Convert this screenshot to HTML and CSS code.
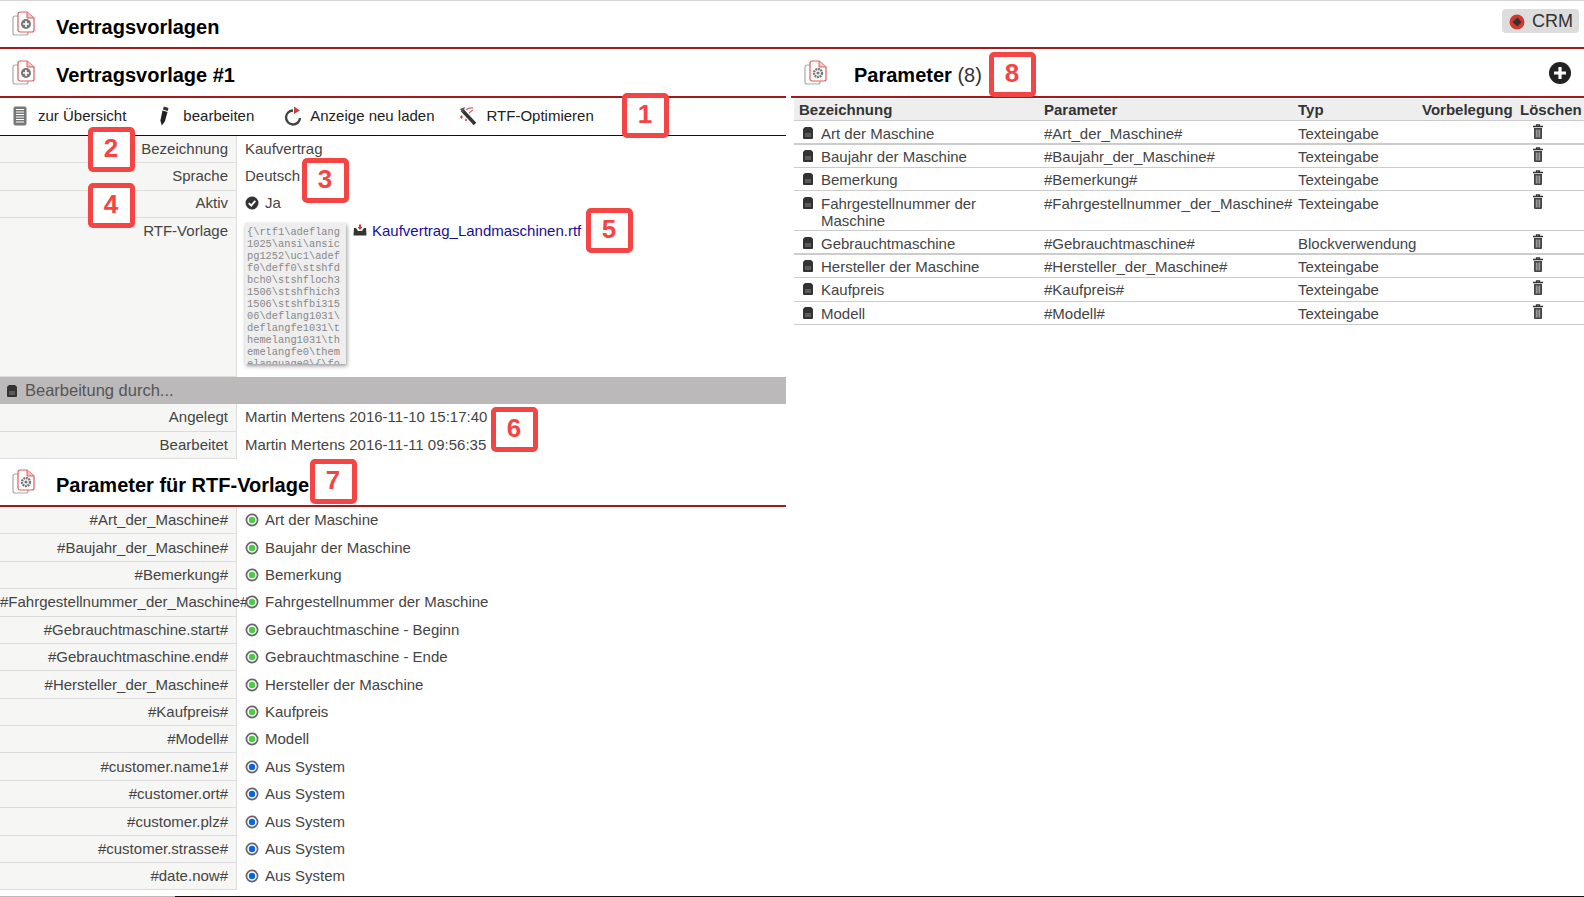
FILE: index.html
```html
<!DOCTYPE html>
<html lang="de">
<head>
    <meta charset="UTF-8">
    <title>Vertragsvorlagen</title>
    <link rel="stylesheet" href="styles.css">
</head>
<body>
    <svg class="defs" width="0" height="0">
        <symbol id="i-doc" viewBox="0 0 24 26">
            <path d="M6 5H3a2 2 0 0 0-2 2v15a2 2 0 0 0 2 2h11a2 2 0 0 0 2-2v-1" fill="#fff" stroke="#aaa" stroke-width="1.2"/>
            <path d="M8 1h7l7 6v12a2 2 0 0 1-2 2H8a2 2 0 0 1-2-2V3a2 2 0 0 1 2-2z" fill="#fff" stroke="#d9605c" stroke-width="1.2"/>
            <path d="M15 1v6h7" fill="#f3c6c4" stroke="#d9605c" stroke-width="1"/>
            <circle cx="14" cy="13" r="5" fill="#777"/>
            <path d="M14 10v6M11 13h6" stroke="#fff" stroke-width="1.6"/>
        </symbol>
        <symbol id="i-gear" viewBox="0 0 24 26">
            <path d="M6 5H3a2 2 0 0 0-2 2v15a2 2 0 0 0 2 2h11a2 2 0 0 0 2-2v-1" fill="#fff" stroke="#aaa" stroke-width="1.2"/>
            <path d="M8 1h7l7 6v12a2 2 0 0 1-2 2H8a2 2 0 0 1-2-2V3a2 2 0 0 1 2-2z" fill="#fff" stroke="#d9605c" stroke-width="1.2"/>
            <path d="M15 1v6h7" fill="#f3c6c4" stroke="#d9605c" stroke-width="1"/>
            <circle cx="14" cy="13" r="4" fill="none" stroke="#777" stroke-width="2.4" stroke-dasharray="2 .6"/>
            <circle cx="14" cy="13" r="1.6" fill="#777"/>
        </symbol>
        <symbol id="i-card" viewBox="0 0 12 13">
            <path d="M3 1h6l2 2v9a1 1 0 0 1-1 1H2a1 1 0 0 1-1-1V3z" fill="#333"/>
            <path d="M3 8h6M3 10h6" stroke="#999" stroke-width=".8"/>
        </symbol>
        <symbol id="i-trash" viewBox="0 0 12 15">
            <path d="M1 2.5h10M4.5 2V.8h3V2" fill="none" stroke="#333" stroke-width="1.3"/>
            <path d="M2 4h8v10a1 1 0 0 1-1 1H3a1 1 0 0 1-1-1z" fill="#444"/>
            <path d="M4.3 5.5v8M6 5.5v8M7.7 5.5v8" stroke="#ccc" stroke-width=".8"/>
        </symbol>
        <symbol id="i-radio" viewBox="0 0 14 14">
            <circle cx="7" cy="7" r="5.6" fill="#fff" stroke="#666" stroke-width="1.7"/>
            <circle cx="7" cy="7" r="3.2" fill="currentColor"/>
        </symbol>
    </svg>

    <header class="head head-top">
        <svg class="doc-icon"><use href="#i-doc"/></svg>
        <h1 class="title">Vertragsvorlagen</h1>
        <a class="crm" href="#">
            <svg class="crm-icon" viewBox="0 0 16 16">
                <circle cx="8" cy="8" r="7.5" fill="#d2392e"/>
                <path d="M3.5 8L8.5 3.5L12.5 8L8.5 12.5z" fill="#333"/>
            </svg>
            CRM
        </a>
    </header>

    <div class="page">
        <div class="left">
            <div class="head">
                <svg class="doc-icon"><use href="#i-doc"/></svg>
                <h2 class="title">Vertragsvorlage #1</h2>
            </div>
            <nav class="toolbar">
                <a class="tool tool-list" href="#">
                    <svg class="tool-icon" viewBox="0 0 14 20" width="14" height="20">
                        <rect x=".5" y=".5" width="13" height="19" rx="2" fill="#777"/>
                        <path d="M3 3.5h8M3 6h8M3 8.500h8M3 11h8M3 13.500h8M3 16h8" stroke="#fff" stroke-width="1"/>
                    </svg>
                    zur Übersicht
                </a>
                <a class="tool tool-edit" href="#">
                    <svg class="tool-icon" viewBox="0 0 11 20" width="11" height="20">
                        <path d="M5 0.500L9.500 2L8.800 5L3.800 3.600z" fill="#333"/>
                        <path d="M3.500 4.600L8.500 6L5.800 15.500L2.800 19.500L1.400 14.500z" fill="#222"/>
                    </svg>
                    bearbeiten
                </a>
                <a class="tool tool-reload" href="#">
                    <svg class="tool-icon" viewBox="0 0 18 20" width="18" height="20">
                        <path d="M9 4.500a7 7 0 1 0 7 7.500" fill="none" stroke="#444" stroke-width="2.400"/>
                        <path d="M10 0.500L16 4.500L10 8z" fill="#c9403a"/>
                    </svg>
                    Anzeige neu laden
                </a>
                <a class="tool tool-rtf" href="#">
                    <svg class="tool-icon" viewBox="0 0 19 20" width="19" height="20">
                        <path d="M4 4L17 18" stroke="#333" stroke-width="3.400"/>
                        <path d="M2 3L7 1L5 7" fill="#555"/>
                        <path d="M8 4a8 8 0 0 1 7-2M11 7l4-3" fill="none" stroke="#d26a66" stroke-width="1.300"/>
                        <path d="M2 11h3M3.500 9.500v3M7 14h2M8 13v2" stroke="#c9403a" stroke-width="1.200"/>
                    </svg>
                    RTF-Optimieren
                </a>
            </nav>

            <div class="row row-top">
                <div class="label">Bezeichnung</div>
                <div class="value">Kaufvertrag</div>
            </div>
            <div class="row row-top">
                <div class="label">Sprache</div>
                <div class="value">Deutsch</div>
            </div>
            <div class="row row-top">
                <div class="label">Aktiv</div>
                <div class="value value-icon">
                    <svg class="state" viewBox="0 0 14 14">
                        <circle cx="7" cy="7" r="6.500" fill="#333"/>
                        <path d="M3.800 7.200L6.200 9.600L10.300 4.800" fill="none" stroke="#fff" stroke-width="1.900"/>
                    </svg>
                    Ja
                </div>
            </div>
            <div class="row row-top row-file">
                <div class="label">RTF-Vorlage</div>
                <div class="value file">
                    <div class="preview">{\rtf1\adeflang1025\ansi\ansicpg1252\uc1\adeff0\deff0\stshfdbch0\stshfloch31506\stshfhich31506\stshfbi31506\deflang1031\deflangfe1031\themelang1031\themelangfe0\themelanguage0\{\fonttbl</div>
                    <svg class="tray" viewBox="0 0 14 12">
                        <path d="M3 4H1L0.500 11.500H13.500L13 4H11L9 7H5z" fill="#333"/>
                        <path d="M7 6L4.500 3H6V0.500H8V3H9.500z" fill="#d2392e"/>
                    </svg>
                    <a class="file-link" href="#">Kaufvertrag_Landmaschinen.rtf</a>
                </div>
            </div>

            <div class="section-bar">
                <svg class="card"><use href="#i-card"/></svg>
                Bearbeitung durch...
            </div>
            <div class="row row-by">
                <div class="label">Angelegt</div>
                <div class="value">Martin Mertens 2016-11-10 15:17:40</div>
            </div>
            <div class="row row-by">
                <div class="label">Bearbeitet</div>
                <div class="value">Martin Mertens 2016-11-11 09:56:35</div>
            </div>

            <div class="head head-params">
                <svg class="doc-icon"><use href="#i-gear"/></svg>
                <h2 class="title">Parameter für RTF-Vorlage</h2>
            </div>
            <div class="row">
                <div class="label">#Art_der_Maschine#</div>
                <div class="value value-icon"><svg class="state green"><use href="#i-radio"/></svg>Art der Maschine</div>
            </div>
            <div class="row">
                <div class="label">#Baujahr_der_Maschine#</div>
                <div class="value value-icon"><svg class="state green"><use href="#i-radio"/></svg>Baujahr der Maschine</div>
            </div>
            <div class="row">
                <div class="label">#Bemerkung#</div>
                <div class="value value-icon"><svg class="state green"><use href="#i-radio"/></svg>Bemerkung</div>
            </div>
            <div class="row">
                <div class="label">#Fahrgestellnummer_der_Maschine#</div>
                <div class="value value-icon"><svg class="state green"><use href="#i-radio"/></svg>Fahrgestellnummer der Maschine</div>
            </div>
            <div class="row">
                <div class="label">#Gebrauchtmaschine.start#</div>
                <div class="value value-icon"><svg class="state green"><use href="#i-radio"/></svg>Gebrauchtmaschine - Beginn</div>
            </div>
            <div class="row">
                <div class="label">#Gebrauchtmaschine.end#</div>
                <div class="value value-icon"><svg class="state green"><use href="#i-radio"/></svg>Gebrauchtmaschine - Ende</div>
            </div>
            <div class="row">
                <div class="label">#Hersteller_der_Maschine#</div>
                <div class="value value-icon"><svg class="state green"><use href="#i-radio"/></svg>Hersteller der Maschine</div>
            </div>
            <div class="row">
                <div class="label">#Kaufpreis#</div>
                <div class="value value-icon"><svg class="state green"><use href="#i-radio"/></svg>Kaufpreis</div>
            </div>
            <div class="row">
                <div class="label">#Modell#</div>
                <div class="value value-icon"><svg class="state green"><use href="#i-radio"/></svg>Modell</div>
            </div>
            <div class="row">
                <div class="label">#customer.name1#</div>
                <div class="value value-icon"><svg class="state blue"><use href="#i-radio"/></svg>Aus System</div>
            </div>
            <div class="row">
                <div class="label">#customer.ort#</div>
                <div class="value value-icon"><svg class="state blue"><use href="#i-radio"/></svg>Aus System</div>
            </div>
            <div class="row">
                <div class="label">#customer.plz#</div>
                <div class="value value-icon"><svg class="state blue"><use href="#i-radio"/></svg>Aus System</div>
            </div>
            <div class="row">
                <div class="label">#customer.strasse#</div>
                <div class="value value-icon"><svg class="state blue"><use href="#i-radio"/></svg>Aus System</div>
            </div>
            <div class="row">
                <div class="label">#date.now#</div>
                <div class="value value-icon"><svg class="state blue"><use href="#i-radio"/></svg>Aus System</div>
            </div>
        </div>

        <div class="right">
            <div class="head head-right">
                <svg class="doc-icon"><use href="#i-gear"/></svg>
                <h2 class="title">Parameter <span class="count">(8)</span></h2>
                <svg class="add" viewBox="0 0 22 22">
                    <circle cx="11" cy="11" r="11" fill="#222"/>
                    <path d="M11 5v12M5 11h12" stroke="#fff" stroke-width="3.200"/>
                </svg>
            </div>
            <table class="params">
                <colgroup>
                    <col class="c-name"><col class="c-param"><col class="c-type"><col class="c-default"><col class="c-del">
                </colgroup>
                <thead>
                    <tr><th>Bezeichnung</th><th>Parameter</th><th>Typ</th><th>Vorbelegung</th><th>Löschen</th></tr>
                </thead>
                <tbody>
                    <tr class="thick low">
                        <td><div class="name"><svg class="card"><use href="#i-card"/></svg>Art der Maschine</div></td>
                        <td>#Art_der_Maschine#</td><td>Texteingabe</td><td></td>
                        <td class="del"><svg class="trash"><use href="#i-trash"/></svg></td>
                    </tr>
                    <tr>
                        <td><div class="name"><svg class="card"><use href="#i-card"/></svg>Baujahr der Maschine</div></td>
                        <td>#Baujahr_der_Maschine#</td><td>Texteingabe</td><td></td>
                        <td class="del"><svg class="trash"><use href="#i-trash"/></svg></td>
                    </tr>
                    <tr>
                        <td><div class="name"><svg class="card"><use href="#i-card"/></svg>Bemerkung</div></td>
                        <td>#Bemerkung#</td><td>Texteingabe</td><td></td>
                        <td class="del"><svg class="trash"><use href="#i-trash"/></svg></td>
                    </tr>
                    <tr class="low">
                        <td><div class="name"><svg class="card"><use href="#i-card"/></svg>Fahrgestellnummer der Maschine</div></td>
                        <td>#Fahrgestellnummer_der_Maschine#</td><td>Texteingabe</td><td></td>
                        <td class="del"><svg class="trash"><use href="#i-trash"/></svg></td>
                    </tr>
                    <tr class="thick low">
                        <td><div class="name"><svg class="card"><use href="#i-card"/></svg>Gebrauchtmaschine</div></td>
                        <td>#Gebrauchtmaschine#</td><td>Blockverwendung</td><td></td>
                        <td class="del"><svg class="trash"><use href="#i-trash"/></svg></td>
                    </tr>
                    <tr>
                        <td><div class="name"><svg class="card"><use href="#i-card"/></svg>Hersteller der Maschine</div></td>
                        <td>#Hersteller_der_Maschine#</td><td>Texteingabe</td><td></td>
                        <td class="del"><svg class="trash"><use href="#i-trash"/></svg></td>
                    </tr>
                    <tr>
                        <td><div class="name"><svg class="card"><use href="#i-card"/></svg>Kaufpreis</div></td>
                        <td>#Kaufpreis#</td><td>Texteingabe</td><td></td>
                        <td class="del"><svg class="trash"><use href="#i-trash"/></svg></td>
                    </tr>
                    <tr>
                        <td><div class="name"><svg class="card"><use href="#i-card"/></svg>Modell</div></td>
                        <td>#Modell#</td><td>Texteingabe</td><td></td>
                        <td class="del"><svg class="trash"><use href="#i-trash"/></svg></td>
                    </tr>
                </tbody>
            </table>
        </div>
    </div>

    <div class="bottom-line"><span class="bottom-gray"></span><span class="bottom-black"></span></div>

    <div class="badge badge-1">1</div>
    <div class="badge badge-2">2</div>
    <div class="badge badge-3">3</div>
    <div class="badge badge-4">4</div>
    <div class="badge badge-5">5</div>
    <div class="badge badge-6">6</div>
    <div class="badge badge-7">7</div>
    <div class="badge badge-8">8</div>
</body>
</html>
```

FILE: styles.css
```css
* {
    box-sizing: border-box;
    margin: 0;
    padding: 0;
}

html, body {
    height: 897px;
    overflow: hidden;
}

body {
    position: relative;
    background: #fff;
    color: #444;
    font-family: "Liberation Sans", Arial, sans-serif;
    font-size: 15px;
}

a {
    text-decoration: none;
    color: inherit;
}

.defs {
    position: absolute;
}

/* headings */
.head {
    display: flex;
    align-items: center;
    height: 49px;
    padding-left: 12px;
    border-bottom: 2px solid #a01c1c;
}

.head-top {
    border-top: 1px solid #d4d4d4;
    height: 49px;
}

.doc-icon {
    width: 24px;
    height: 26px;
    margin-right: 20px;
    flex: none;
}

.title {
    margin-top: 6px;
    color: #000;
    font-size: 20px;
    font-weight: bold;
}

.count {
    font-weight: normal;
    color: #333;
}

.crm {
    display: flex;
    align-items: center;
    gap: 7px;
    height: 24px;
    margin-left: auto;
    margin-right: 5px;
    margin-bottom: 6px;
    padding: 1px 6px 0 7px;
    background: #ddd;
    border-radius: 4px;
    color: #333;
    font-size: 18px;
}

.crm-icon {
    width: 16px;
    height: 16px;
}

.page {
    display: flex;
}

.left {
    width: 786px;
    flex: none;
}

.right {
    flex: 1;
    margin-left: 5px;
}

/* toolbar */
.toolbar {
    display: flex;
    align-items: center;
    height: 38px;
    padding: 0 0 2px 13px;
    border-bottom: 1px solid #111;
    color: #222;
}

.tool {
    display: flex;
    align-items: center;
}

.tool-icon {
    flex: none;
}

.tool-list { gap: 11px; margin-right: 33px; }
.tool-edit { gap: 13px; margin-right: 30px; }
.tool-reload { gap: 8px; margin-right: 23px; }
.tool-rtf { gap: 10px; }

/* label / value rows */
.row {
    display: grid;
    grid-template-columns: 237px 1fr;
    height: 27.4px;
}

.label {
    padding: 4.3px 8px 0 0;
    background: #f6f6f4;
    border-right: 1px solid #ddd;
    border-bottom: 1px solid #ddd;
    text-align: right;
    white-space: nowrap;
}

.value {
    padding: 4.3px 0 0 8px;
    white-space: nowrap;
}

.row-top .label,
.row-top .value {
    padding-top: 3.6px;
}

.row-by .label,
.row-by .value {
    padding-top: 4.1px;
}

.value-icon {
    display: flex;
    align-items: flex-start;
}

.state {
    width: 14px;
    height: 14px;
    margin: 2px 6px 0 0;
    flex: none;
}

.green { color: #4ccb46; }
.blue { color: #0a66e0; }

.row-file {
    height: 159px;
}

.row-top .file {
    display: flex;
    align-items: flex-start;
    padding-top: 5px;
}

.preview {
    width: 101px;
    height: 141px;
    padding: 3px 0 0 2px;
    overflow: hidden;
    background: #eee;
    box-shadow: 1px 2px 4px #999;
    color: #888;
    font-family: "Liberation Mono", monospace;
    font-size: 10.33px;
    line-height: 12px;
    white-space: normal;
    line-break: anywhere;
}

.tray {
    width: 14px;
    height: 12px;
    margin: 1px 5px 0 7px;
    flex: none;
}

.file-link {
    margin-top: -1px;
    color: #1a0d99;
}

.section-bar {
    display: flex;
    align-items: center;
    gap: 7px;
    height: 27px;
    padding-left: 6px;
    background: #bbb9ba;
    color: #555;
    font-size: 16.5px;
}

.card {
    width: 12px;
    height: 13px;
    flex: none;
}

.head-params {
    height: 48px;
}

.head-params .title {
    margin-top: 8px;
}

/* parameter table on the right */
.head-right {
    padding-left: 13px;
    padding-right: 13px;
}

.head-right .doc-icon {
    margin-right: 26px;
}

.add {
    width: 22px;
    height: 22px;
    margin-left: auto;
}

.params {
    width: 790px;
    margin-left: 3px;
    border-collapse: collapse;
    table-layout: fixed;
    color: #444;
}

.c-name { width: 245px; }
.c-param { width: 254px; }
.c-type { width: 124px; }
.c-default { width: 98px; }
.c-del { width: 69px; }

.params th {
    height: 22px;
    padding: 0 0 0 5px;
    background: #eee;
    border-top: 1px solid #fff;
    border-bottom: 1px solid #ccc;
    color: #333;
    text-align: left;
    font-size: 15px;
}

.params td {
    height: 23.25px;
    padding: 3px 0 2px 5px;
    border-bottom: 1px solid #ccc;
    line-height: 17px;
    vertical-align: top;
    white-space: normal;
}

.params td:nth-child(2) {
    white-space: nowrap;
}

.thick td {
    border-bottom-width: 2px;
}

.low td {
    padding-top: 4px;
    padding-bottom: 1px;
}

.name {
    display: flex;
    gap: 7px;
    padding-left: 3px;
}

.name .card {
    margin-top: 1px;
}

.del {
    text-align: center;
}

.trash {
    width: 12px;
    height: 15px;
    display: block;
    margin: -1px auto 0 12px;
}

/* thin line along the bottom edge */
.bottom-line {
    display: flex;
    height: 1px;
    margin-top: 6px;
}

.bottom-gray {
    width: 175px;
    background: #bbb;
}

.bottom-black {
    flex: 1;
    background: #111;
}

/* numbered callouts on top of the page */
.badge {
    position: absolute;
    display: flex;
    align-items: center;
    justify-content: center;
    width: 47px;
    height: 45px;
    padding: 0 1px 2px 0;
    background: #fff;
    border: 5px solid #f44545;
    border-radius: 5px;
    color: #f44545;
    font-size: 26px;
    font-weight: bold;
}

.badge-1 { left: 622px; top: 93px; }
.badge-2 { left: 88px; top: 127px; }
.badge-3 { left: 302px; top: 158px; }
.badge-4 { left: 88px; top: 183px; }
.badge-5 { left: 586px; top: 208px; }
.badge-6 { left: 491px; top: 407px; }
.badge-7 { left: 310px; top: 459px; }
.badge-8 { left: 989px; top: 52px; }
```
